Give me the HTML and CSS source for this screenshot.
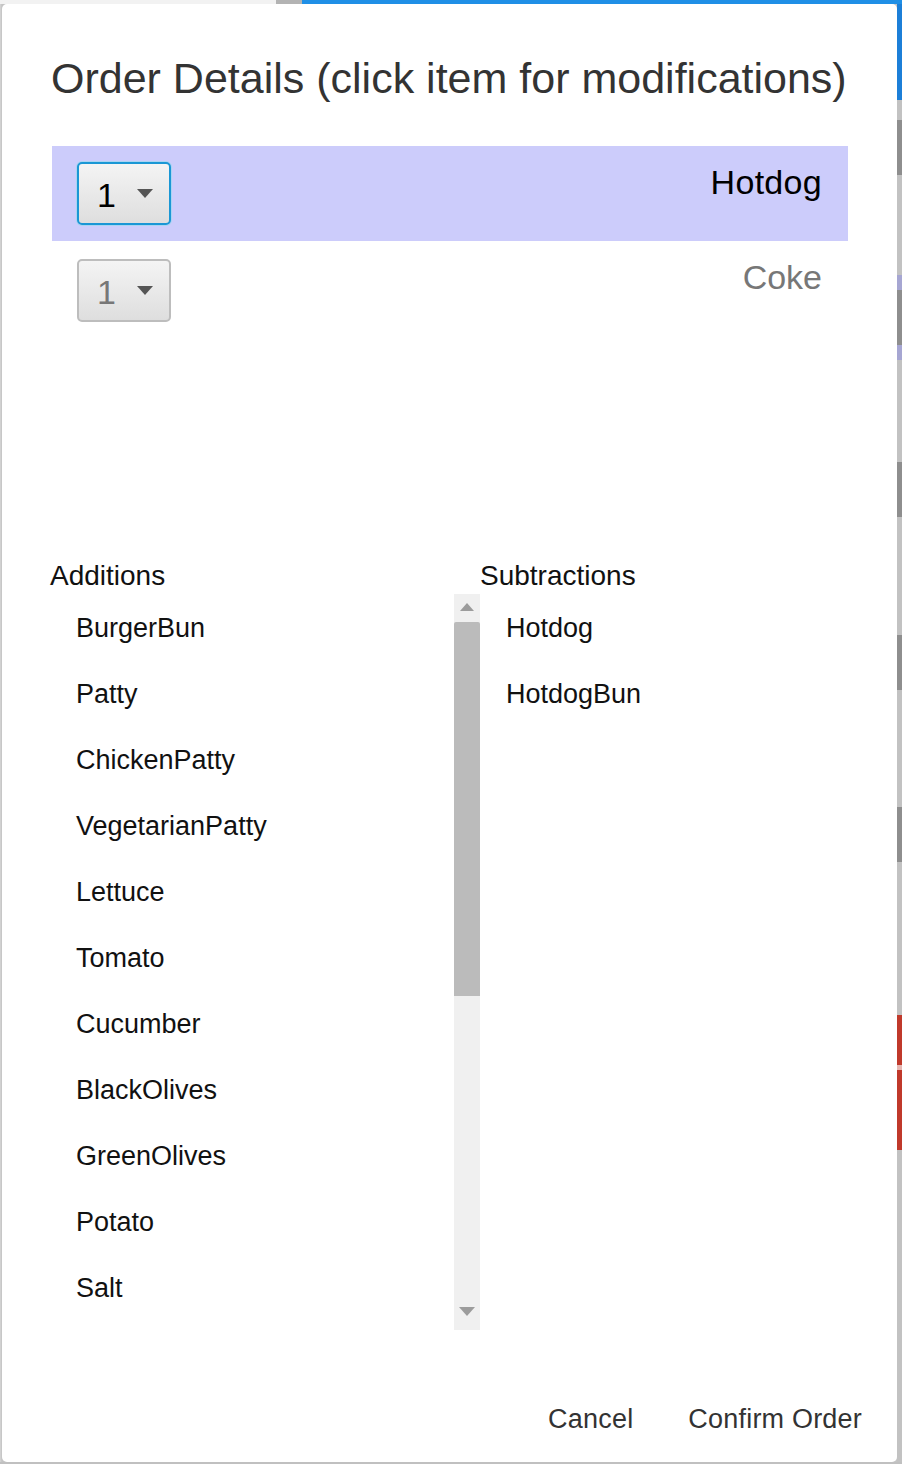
FILE: index.html
```html
<!DOCTYPE html>
<html lang="en">
<head>
<meta charset="utf-8">
<title>Order Details</title>
<link rel="stylesheet" href="styles.css">
</head>
<body>
<div class="screen">
  <div class="topbar">
    <span class="seg seg-light"></span>
    <span class="seg seg-gray"></span>
    <span class="seg seg-blue"></span>
  </div>
  <div class="main">
    <div class="left-edge"></div>
    <div class="dialog">
      <h1 class="title">Order Details (click item for modifications)</h1>
      <ul class="order-list">
        <li class="order-row selected">
          <div class="combo focused"><span class="combo-value">1</span><span class="combo-arrow"></span></div>
          <span class="item-name">Hotdog</span>
        </li>
        <li class="order-row">
          <div class="combo"><span class="combo-value muted">1</span><span class="combo-arrow"></span></div>
          <span class="item-name muted">Coke</span>
        </li>
      </ul>
      <div class="columns">
        <section class="col col-left">
          <h2 class="col-label">Additions</h2>
          <div class="list-box">
            <ul class="items">
              <li>BurgerBun</li>
              <li>Patty</li>
              <li>ChickenPatty</li>
              <li>VegetarianPatty</li>
              <li>Lettuce</li>
              <li>Tomato</li>
              <li>Cucumber</li>
              <li>BlackOlives</li>
              <li>GreenOlives</li>
              <li>Potato</li>
              <li>Salt</li>
            </ul>
            <div class="scrollbar">
              <div class="sb-btn"><span class="arrow-up"></span></div>
              <div class="sb-track"><div class="sb-thumb"></div></div>
              <div class="sb-btn sb-btn-down"><span class="arrow-down"></span></div>
            </div>
          </div>
        </section>
        <section class="col col-right">
          <h2 class="col-label">Subtractions</h2>
          <ul class="items">
            <li>Hotdog</li>
            <li>HotdogBun</li>
          </ul>
        </section>
      </div>
      <div class="actions">
        <button class="btn" type="button">Cancel</button>
        <button class="btn" type="button">Confirm Order</button>
      </div>
    </div>
    <div class="right-strip"></div>
  </div>
  <div class="bottom-edge"></div>
</div>
</body>
</html>
```

FILE: styles.css
```css
* { box-sizing: border-box; }

html, body {
  margin: 0;
  padding: 0;
}

body {
  width: 902px;
  height: 1464px;
  overflow: hidden;
  background: #c4c4c4;
  font-family: "Liberation Sans", Arial, sans-serif;
}

.screen {
  width: 902px;
  height: 1464px;
  display: flex;
  flex-direction: column;
}

.topbar {
  display: flex;
  height: 4px;
}
.seg { display: block; height: 4px; }
.seg-light { width: 276px; background: #f2f2f2; }
.seg-gray { width: 26px; background: #b3b3b3; }
.seg-blue { flex: 1; background: #1f8fe6; }

.main {
  display: flex;
  height: 1458px;
}

.left-edge {
  width: 2px;
  background: linear-gradient(to right, #d6d6d6, #c2c2c2);
}

.right-strip {
  width: 5px;
  background: linear-gradient(to bottom,
    #1c7fd8 0, #1c7fd8 96px,
    #c2c2c2 96px, #c2c2c2 116px,
    #8e8e8e 116px, #8e8e8e 171px,
    #c2c2c2 171px, #c2c2c2 271px,
    #a6a6d2 271px, #a6a6d2 286px,
    #8e8e8e 286px, #8e8e8e 341px,
    #a6a6d2 341px, #a6a6d2 356px,
    #c2c2c2 356px, #c2c2c2 458px,
    #8e8e8e 458px, #8e8e8e 513px,
    #c2c2c2 513px, #c2c2c2 631px,
    #8e8e8e 631px, #8e8e8e 686px,
    #c2c2c2 686px, #c2c2c2 803px,
    #8e8e8e 803px, #8e8e8e 858px,
    #c2c2c2 858px, #c2c2c2 1011px,
    #c0392b 1011px, #c0392b 1061px,
    #e6b7b2 1061px, #e6b7b2 1066px,
    #c0392b 1066px, #c0392b 1146px,
    #c2c2c2 1146px, #c2c2c2 100%);
}

.bottom-edge {
  height: 2px;
  background: #c0c0c0;
}

.dialog {
  flex: 1;
  height: 1458px;
  background: #fff;
  border-radius: 5px;
  display: flex;
  flex-direction: column;
}

.title {
  margin: 0;
  padding: 49px 0 0 49px;
  font-size: 43px;
  line-height: 50px;
  font-weight: normal;
  color: #333;
  white-space: nowrap;
}

.order-list {
  list-style: none;
  margin: 43px 49px 0 50px;
  padding: 0;
  height: 384px;
}

.order-row {
  display: flex;
  align-items: flex-start;
  height: 95px;
  padding: 16px 26px 0 25px;
}
.order-row + .order-row {
  height: 96px;
  padding-top: 18px;
}
.order-row.selected { background: #ccccfb; }

.combo {
  width: 94px;
  height: 63px;
  border: 2px solid #bdbdbd;
  border-radius: 5px;
  background: linear-gradient(to bottom, #f4f4f4, #dedede);
  display: flex;
  align-items: center;
  padding: 2px 16px 0 18px;
}
.combo.focused {
  border-color: #1a97d5;
  box-shadow: 0 0 0 1px #a9d4f2;
}

.combo-value {
  font-size: 34px;
  line-height: 40px;
  color: #000;
}
.combo-value.muted { color: #777; }

.combo-arrow {
  margin-left: auto;
  width: 0;
  height: 0;
  border-left: 8px solid transparent;
  border-right: 8px solid transparent;
  border-top: 9px solid #555;
  margin-top: -2px;
}

.item-name {
  margin-left: auto;
  font-size: 34px;
  line-height: 40px;
  color: #000;
  letter-spacing: 0.3px;
}
.order-row + .order-row .item-name { margin-top: -2px; }
.item-name.muted { color: #777; letter-spacing: 0; }

.columns {
  display: grid;
  grid-template-columns: 430px 1fr;
  margin: 30px 0 0 48px;
}

.col-label {
  margin: 0 0 3px;
  font-size: 28px;
  line-height: 31px;
  font-weight: normal;
  color: #111;
}

.list-box {
  display: flex;
  margin-left: 1px;
  height: 736px;
}

.items {
  list-style: none;
  margin: 0;
  padding: 1px 0 0 25px;
  flex: 1;
}
.items li {
  height: 66px;
  line-height: 66px;
  font-size: 27px;
  color: #111;
  white-space: nowrap;
}

.col-right .items { padding-left: 26px; }

.scrollbar {
  width: 26px;
  height: 736px;
  background: #f0f0f0;
  display: flex;
  flex-direction: column;
}
.sb-btn {
  height: 28px;
  display: flex;
  justify-content: center;
  align-items: center;
}
.sb-btn-down { height: 34px; }
.arrow-up {
  width: 0; height: 0;
  border-left: 7px solid transparent;
  border-right: 7px solid transparent;
  border-bottom: 8px solid #9c9c9c;
  margin-top: -2px;
}
.arrow-down {
  width: 0; height: 0;
  border-left: 8px solid transparent;
  border-right: 8px solid transparent;
  border-top: 9px solid #9c9c9c;
  margin-top: -4px;
}
.sb-track {
  flex: 1;
}
.sb-thumb {
  height: 374px;
  background: #bbbbbb;
  border-radius: 2px 2px 0 0;
}

.actions {
  display: flex;
  justify-content: flex-end;
  gap: 55px;
  margin-top: 73px;
  padding-right: 35px;
}
.btn {
  background: none;
  border: none;
  padding: 0;
  font-family: "Liberation Sans", Arial, sans-serif;
  font-size: 27px;
  line-height: 32px;
  color: #333;
  letter-spacing: 0.2px;
}
```
